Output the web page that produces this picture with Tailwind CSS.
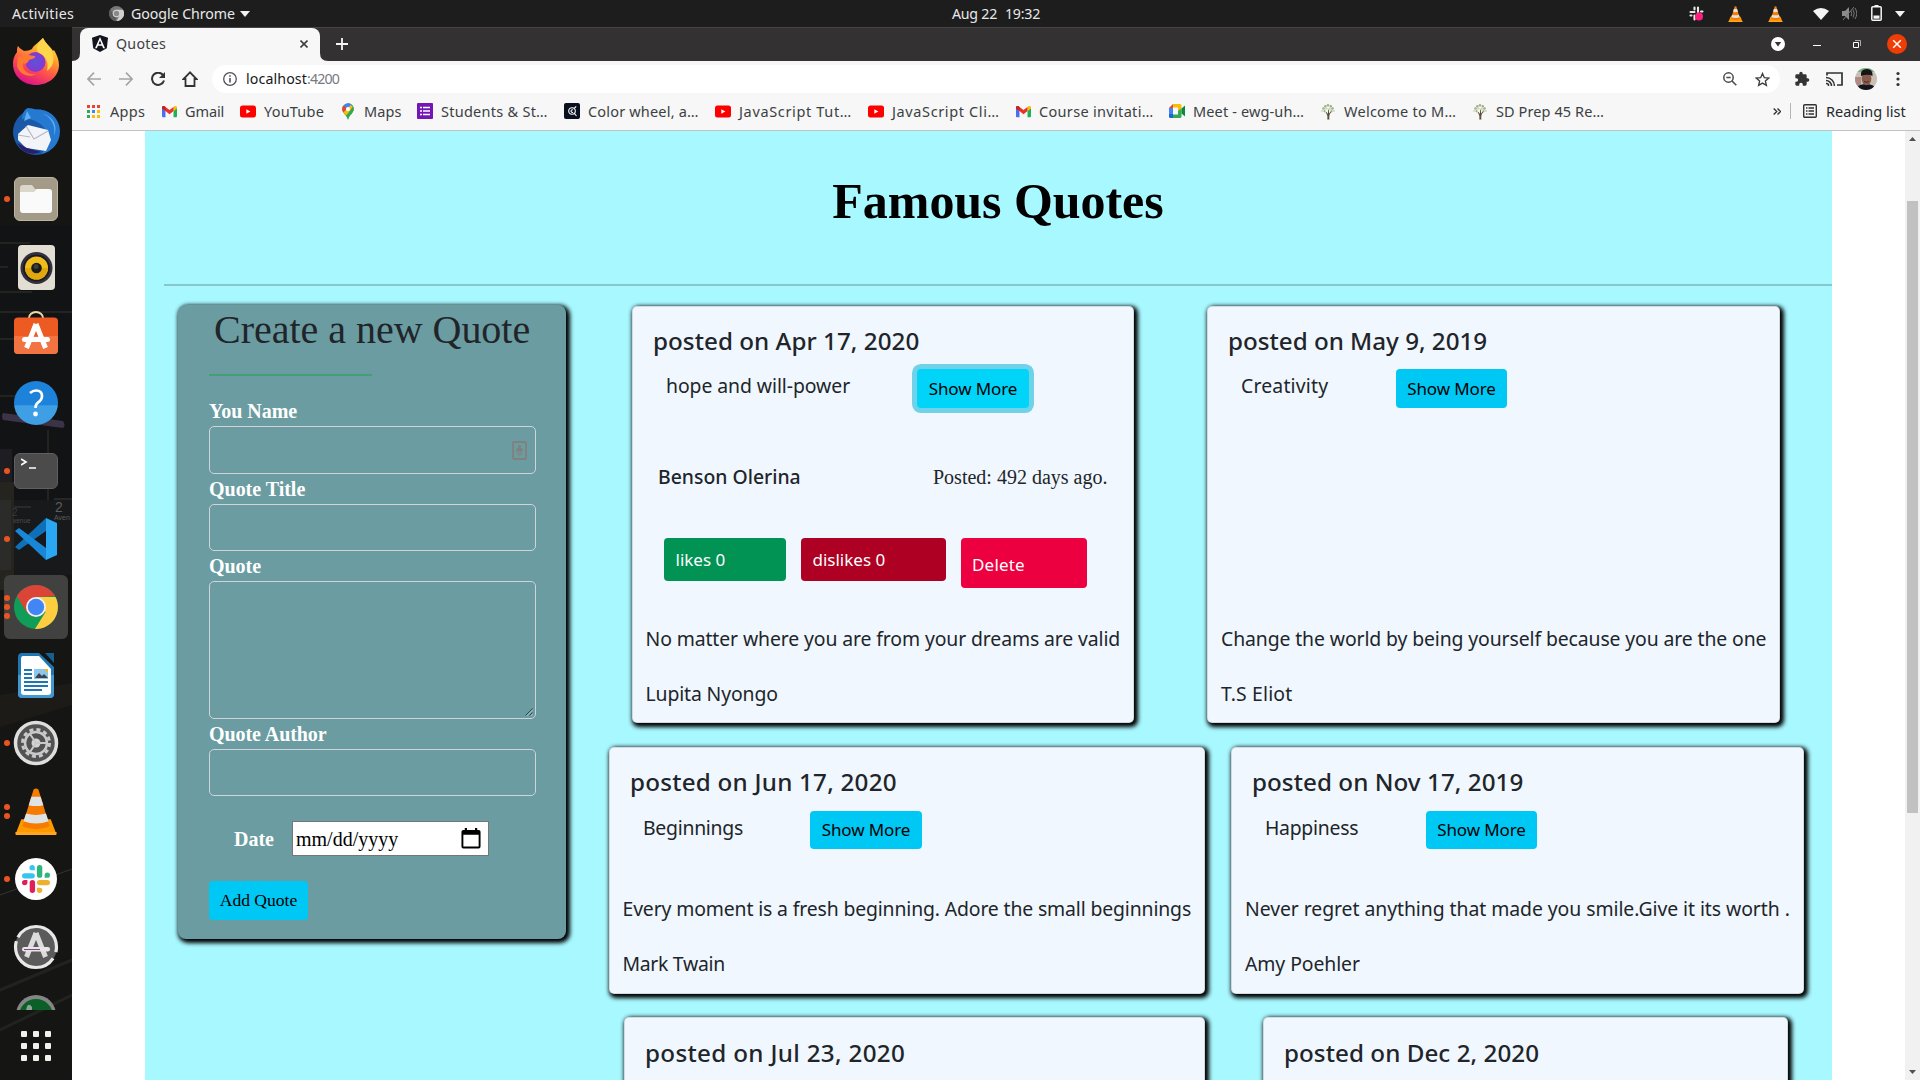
<!DOCTYPE html>
<html lang="en">
<head>
<meta charset="utf-8">
<title>Quotes</title>
<script src="https://cdn.jsdelivr.net/npm/@tailwindcss/browser@4"></script>
</head>
<body class="w-[1920px] h-[1080px] overflow-hidden flex flex-col bg-[#141414] font-['Noto_Sans',sans-serif] text-[14.2px]">

<!-- Shared icon symbols -->
<svg class="hidden">
  <symbol id="gmail" viewBox="0 0 16 12"><path d="M0 1.5V11a1 1 0 0 0 1 1h2.700V5.500z" fill="#4d6bf5"/><path d="M16 1.500V11a1 1 0 0 1-1 1h-2.700V5.500z" fill="#1eb156"/><path d="M12.300 5.500V1.200l1-.8C14.500-.4 16 .2 16 1.600v1.200z" fill="#fbbc04"/><path d="M0 2.800V1.600C0 .2 1.500-.4 2.700.4L8 4.400 13.300.4 12.300 1.200V5.500L8 8.800 3.700 5.500z" fill="#ea3323"/><path d="M0 2.800V1.600C0 .2 1.500-.4 2.700.4l1 .8v4.300z" fill="#c5221f"/></symbol>
  <symbol id="yt" viewBox="0 0 16 12"><rect width="16" height="12" rx="2.500" fill="#f00"/><path d="M6.300 3.800v4.400l4-2.200z" fill="#fff"/></symbol>
  <symbol id="tree" viewBox="0 0 16 16"><path d="M7.300 16c.4-3 .2-5-1.800-7l1-.4 1.300 1.800L8.300 6l.7.1v4l1.700-2 .8.500C9.300 10.500 9 13 9.400 16z" fill="#5a5038"/><g fill="#9db07f"><circle cx="3.500" cy="5" r="1.300"/><circle cx="5.300" cy="2.700" r="1.200"/><circle cx="8" cy="1.700" r="1.200"/><circle cx="10.800" cy="2.700" r="1.200"/><circle cx="12.500" cy="5" r="1.300"/><circle cx="4.600" cy="7.700" r="1.100"/><circle cx="11.500" cy="7.700" r="1.100"/></g><g fill="#cdd6bd"><circle cx="6.300" cy="5" r="1.300"/><circle cx="9.800" cy="5.200" r="1.300"/><circle cx="2" cy="7.500" r=".9"/><circle cx="14" cy="7.500" r=".9"/></g></symbol>
  <symbol id="cone" viewBox="0 0 42 48"><path d="M6 32h30l5 13a2 2 0 0 1-2 3H3a2 2 0 0 1-2-3z" fill="#f90"/><path d="M0 45h42v2q0 1-1 1H1q-1 0-1-1z" fill="#ffa61e"/><path d="M18.500 1.500q2.500-2 5 0L35 39q-14 6-28 0z" fill="#f57c00"/><path d="M16.300 9h9.400l2.800 8.500q-7.500 2-15 0z" fill="#dfe3e6"/><path d="M10.800 26q10 3 20.400 0l2.600 8q-12.500 4.500-25.600 0z" fill="#dfe3e6"/></symbol>
  <symbol id="slack" viewBox="0 0 24 24"><rect x="0" y="7" width="11" height="4.600" rx="2.300" fill="#36c5f0"/><path d="M11 4.600H8.700A2.300 2.300 0 1 1 11 2.300z" fill="#36c5f0"/><rect x="12.800" y="0" width="4.600" height="11" rx="2.300" fill="#2eb67d"/><path d="M19.400 11V8.700a2.300 2.300 0 1 1 2.300 2.300z" fill="#2eb67d"/><rect x="12.800" y="12.800" width="11.200" height="4.600" rx="2.300" fill="#ecb22e"/><path d="M12.800 19.400h2.300a2.300 2.300 0 1 1-2.300 2.300z" fill="#ecb22e"/><rect x="6.600" y="12.800" width="4.600" height="11.200" rx="2.300" fill="#e01e5a"/><path d="M4.600 12.800v2.300a2.300 2.300 0 1 1-2.300-2.300z" fill="#e01e5a"/></symbol>
  <symbol id="cal" viewBox="0 0 20 22"><path d="M2 2h1.500V0h2.300v2h8.400V0h2.300v2H18q2 0 2 2v15.500q0 2-2 2H2q-2 0-2-2V4q0-2 2-2zm0 5v12.500h16V7z" fill="#000" fill-rule="evenodd"/></symbol>
</svg>

<!-- System bar -->
<header class="h-[27px] shrink-0 flex items-center bg-[#1d1d1d] text-[#e8e8e8] leading-[27px]">
  <span class="ml-3 w-[97px] tracking-[0.29px]">Activities</span>
  <svg class="w-[15px] h-[15px]" viewBox="0 0 16 16"><circle cx="8" cy="8" r="8" fill="#787878"/><path d="M8 4h7a8 8 0 0 1-7 12l3.400-6z" fill="#cfcfcf"/><path d="M1.500 3.500L5 10l3 2-1 4A8 8 0 0 1 1.500 3.500z" fill="#5c5c5c"/><circle cx="8" cy="8" r="4" fill="#d8d8d8"/><circle cx="8" cy="8" r="2.900" fill="#8a8a8a"/></svg>
  <span class="ml-[7px] tracking-[-0.06px]">Google Chrome</span>
  <svg class="ml-[5px] w-[10px] h-[6px]" viewBox="0 0 10 6"><path d="M0 0h10L5 6z" fill="#f2f2f2"/></svg>
  <span class="ml-[702px] w-[53px] -mt-px tracking-[-0.22px]">Aug 22</span><span class="w-[35px] -mt-px tracking-[-0.22px]">19:32</span>
  <div class="ml-auto mr-[15px] flex items-center">
    <svg class="w-[15px] h-[16px]" viewBox="0 0 15 16"><g stroke="#e8e8e8" stroke-width="2.100" stroke-linecap="round"><path d="M1.500 6h4M5.500 1.500v2M9 1.500V6M12 5.500h1.500M1.500 9.500h1M5.500 9.500v4"/></g><circle cx="10" cy="10.500" r="4" fill="#ff1f7d"/></svg>
    <svg class="ml-[24px] w-[15px] h-4"><use href="#cone"/></svg>
    <svg class="ml-[25px] w-[15px] h-4"><use href="#cone"/></svg>
    <svg class="ml-[30px] w-4 h-3" viewBox="0 0 16 12"><path d="M0 3Q8-3 16 3L8 12z" fill="#f5f5f5"/></svg>
    <svg class="ml-[13px] w-[15px] h-[15px]" viewBox="0 0 15 15"><path d="M0 5h3l4-4v13l-4-4H0z" fill="#8c8c8c"/><path d="M9 5q1.500 2.500 0 5M11 3.500q2.500 4 0 8M13 2q3.500 5.500 0 11M1 14L12 1" fill="none" stroke="#7a7a7a"/></svg>
    <svg class="ml-[14px] mr-px w-[11px] h-4 -mt-0.5" viewBox="0 0 11 16"><path d="M3.500 0h4v2h-4z" fill="#f5f5f5"/><rect x=".8" y="1.800" width="9.400" height="13.400" rx="1" fill="none" stroke="#f5f5f5" stroke-width="1.500"/><path d="M2.500 10.500h6v3.200h-6z" fill="#f5f5f5"/></svg>
    <svg class="ml-[12px] w-[10px] h-[6px]" viewBox="0 0 10 6"><path d="M0 0h10L5 6z" fill="#f2f2f2"/></svg>
  </div>
</header>

<div class="flex flex-1 min-h-0">
  <!-- Dock -->
  <aside class="relative w-[72px] shrink-0 overflow-hidden bg-[#151514]">
    <svg class="absolute inset-0 w-[72px] h-[1053px]" viewBox="0 27 72 1053">
      <path d="M0 225h72v290H0z" fill="#121315"/>
      <g stroke="#36332a" stroke-width="1.500" opacity=".7"><path d="M0 243h30M0 267h8M0 292h32M0 312h72M0 339h30M0 396h20M48 430v70"/></g>
      <path d="M3 413l60 8q3 4 0 7l-60-8q-2-4 0-7z" fill="#463c54" opacity=".8"/><path d="M0 449h12v33H0z" fill="#1e1d22"/><path d="M0 482h14v108H0z" fill="#26241e"/><path d="M0 500h11v70H0z" fill="#2b2b2a"/>
      <path d="M14 500h58v75H14z" fill="#17191a"/><path d="M54 499h18M14 507h17" stroke="#3c3c3c"/>
      <path d="M0 695l72-12v22L0 727z" fill="#1d1b17"/><path d="M0 895l72-26" stroke="#353531" fill="none"/><path d="M0 990l72-30M0 1030l72-35" stroke="#222220" stroke-width="3" fill="none"/>
      <g font-family="Liberation Sans" fill="#5d5d5d"><text x="55" y="512" font-size="14">2</text><text x="54" y="520" font-size="7">Aven</text><text x="12" y="516" font-size="10" fill="#3a3a3a">2</text><text x="13" y="523" font-size="6.500" fill="#4d4d4d">venue</text></g>
    </svg>
    <nav class="relative h-[981px] mt-[2px] overflow-hidden flex flex-col">
      <div class="h-[68px] shrink-0 flex items-center pl-[13px]">
        <svg class="w-[46px] h-[47px] -mt-[3px]" viewBox="0 0 46 47"><defs><linearGradient id="ff" x1=".8" y1="0" x2=".3" y2="1"><stop offset="0" stop-color="#fff44f"/><stop offset=".35" stop-color="#ffa02c"/><stop offset=".65" stop-color="#ff4f4c"/><stop offset="1" stop-color="#d9108c"/></linearGradient><radialGradient id="fp"><stop offset="0" stop-color="#5a55d9"/><stop offset="1" stop-color="#8a35d0"/></radialGradient></defs><path d="M30 0c2 5 8 9 10 13l1-1c3 5 5 10 5 15 0 11-10 20-23 20S0 38 0 26c0-6 2-9 4-12 0-3 0-4 1-6 2 3 5 4 6 5 3 0 6-1 8-2 1-3 7-7 11-11z" fill="url(#ff)"/><circle cx="22.500" cy="24" r="10" fill="url(#fp)"/><path d="M5 19c5-3 10-2 17-1 1 2-3 3-6 4-1 3-4 5-6 3-1 8 6 12 13 11-8 5-18-1-19-9z" fill="#ff7a30"/><path d="M30 0c2 5 8 9 10 16 2 9-2 14-6 17 2-9-1-15-8-18-5-4-1-10 4-15z" fill="#ffd54a"/></svg>
      </div>
      <div class="h-[68px] shrink-0 flex items-center pl-3">
        <svg class="w-12 h-12" viewBox="0 0 48 48"><circle cx="24" cy="25" r="23" fill="#1a59a8"/><path d="M16 1q5 0 8 2c13-2 24 9 24 21 0 13-9 21-19 23 10-9 9-24-2-31-6-4-12-5-17-4 0-6 3-10 6-11z" fill="#2679d0"/><path d="M15 4l-3 10 7-3zM30 6c9 4 14 12 12 23 4-10 0-19-12-23z" fill="#5cb0f0"/><path d="M6 27l10-9 20 5 3 10-5 11-20-3-8-8z" fill="#f2f4f8"/><path d="M14 19l8 13 14-8M6 28l12 2" fill="none" stroke="#b3b8c4" stroke-width="1.200"/><path d="M5 36l10 5 14 4q-16 6-24-9z" fill="#2b1e6b"/></svg>
      </div>
      <div class="h-[68px] shrink-0 flex items-center pl-1"><i class="w-1.5 h-1.5 rounded-full bg-[#e95420]"></i>
        <div class="ml-1 w-11 h-11 rounded-md bg-[#a39b87] border border-[#bcb5a4] flex items-center justify-center"><svg class="w-8 h-7" viewBox="0 0 32 28"><path d="M0 3q0-3 3-3h9l3 4h14v8H0z" fill="#dcd7cb"/><path d="M0 7h14l3-3h12q3 0 3 3v18q0 3-3 3H3q-3 0-3-3z" fill="#fafafa"/></svg></div>
      </div>
      <div class="h-[68px] shrink-0 flex items-center pl-[17.5px]">
        <svg class="w-[37px] h-[45px]" viewBox="0 0 37 45"><rect width="37" height="45" rx="4" fill="#e3ded3"/><circle cx="18.500" cy="23" r="16" fill="#33313d"/><circle cx="18.500" cy="23" r="13.500" fill="#1c1b24"/><circle cx="18.500" cy="23" r="11.500" fill="#f0be1a"/><path d="M7 23a11.500 11.500 0 0 0 23 0z" fill="#e0a80c"/><circle cx="18.500" cy="23" r="5.300" fill="#1b1b1b"/><circle cx="18" cy="21.500" r="2.500" fill="#3d3d3d"/></svg>
      </div>
      <div class="h-[68px] shrink-0 flex items-center pl-[14px]">
        <svg class="w-11 h-[43px] -mt-[5px]" viewBox="0 0 44 43"><path d="M15 9V7a7 6 0 0 1 14 0v2" fill="none" stroke="#efd9a8" stroke-width="2"/><rect y="6.500" width="44" height="36.500" rx="4" fill="#ed5a22"/><path d="M0 25h44v14q0 4-4 4H4q-4 0-4-4z" fill="#f27443"/><path d="M22 13L12.500 37M22 13l9.500 24" stroke="#fff" stroke-width="5" fill="none"/><rect x="8" y="26" width="28" height="5" rx="2.500" fill="#fff"/></svg>
      </div>
      <div class="h-[68px] shrink-0 flex items-center pl-[14px]">
        <div class="w-11 h-11 rounded-full bg-linear-to-b from-[#1c82da] from-55% to-[#3f9fe4] to-56% flex items-center justify-center"><svg class="w-4 h-7" viewBox="0 0 16 28"><path d="M2 4q3-2.500 6-2.500 6 0 6 5.500 0 4-4 6.500-2.500 2-2.500 5.500" fill="none" stroke="#fff" stroke-width="2.700"/><circle cx="7.500" cy="25" r="2.400" fill="#fff"/></svg></div>
      </div>
      <div class="h-[68px] shrink-0 flex items-center pl-1"><i class="w-1.5 h-1.5 rounded-full bg-[#e95420]"></i>
        <div class="ml-1 w-11 h-9 rounded-md bg-[#4b4b4b] border border-[#5f5f5f] pl-1.5 pt-1"><svg class="w-4 h-3" viewBox="0 0 16 12"><path d="M0 1l5 3-5 3M8 10h7" fill="none" stroke="#fff" stroke-width="1.700"/></svg></div>
      </div>
      <div class="h-[68px] shrink-0 flex items-center pl-1"><i class="w-1.5 h-1.5 rounded-full bg-[#e95420]"></i>
        <svg class="ml-[5px] w-[42px] h-[42px]" viewBox="0 0 42 42"><path d="M31 0l11 5v32l-11 5z" fill="#2aa7f2"/><path d="M0 29l4 3L31 13V0z" fill="#0f70b8"/><path d="M0 13l4-3 27 20v12z" fill="#1a86d6"/></svg>
      </div>
      <div class="h-[68px] shrink-0 px-1 py-0.5"><div class="relative w-16 h-16 rounded-md bg-[#414140]">
        <svg class="absolute left-[10px] top-[10px] w-11 h-11" viewBox="0 0 44 44"><circle cx="22" cy="22" r="22" fill="#0f9d58"/><path d="M3 11a22 22 0 0 1 38 0l-19 1-9 15z" fill="#db4437"/><path d="M22 12h19.500A22 22 0 0 1 21 44l10.500-17z" fill="#ffcd40"/><path d="M3 11l9.500 16 6 5 3-20z" fill="#db4437"/><circle cx="22" cy="22" r="10" fill="#f1f1f1"/><circle cx="22" cy="22" r="8.200" fill="#4285f4"/></svg>
        <i class="absolute left-0 top-[20px] w-1.5 h-1.5 rounded-full bg-[#e95420]"></i><i class="absolute left-0 top-[29px] w-1.5 h-1.5 rounded-full bg-[#e95420]"></i><i class="absolute left-0 top-[38px] w-1.5 h-1.5 rounded-full bg-[#e95420]"></i>
      </div></div>
      <div class="h-[68px] shrink-0 flex items-center pl-[18px]">
        <svg class="w-9 h-[45px]" viewBox="0 0 36 45"><path d="M4 0h17l15 14v27q0 4-4 4H4q-4 0-4-4V4q0-4 4-4z" fill="#1c77b3"/><path d="M27 0h9v10z" fill="#16608f"/><path d="M0 22h36v19q0 4-4 4H4q-4 0-4-4z" fill="#4299d0"/><path d="M5 3h16l12 13v23q0 3-3 3H6q-3 0-3-3V6q0-3 2-3z" fill="#fff"/><path d="M6 17h8M6 21h8M6 25h8M6 29h24M6 33h24M6 37h18" stroke="#1c77b3" stroke-width="2"/><path d="M16 16h14v10H16z" fill="#8cc8ee"/><path d="M17 25l4-5 3 3 2-2 4 4z" fill="#3c4248"/><path d="M26 16h4v4z" fill="#f5b91d"/></svg>
      </div>
      <div class="h-[68px] shrink-0 flex items-center pl-1"><i class="w-1.5 h-1.5 rounded-full bg-[#e95420]"></i>
        <svg class="ml-[3px] w-[46px] h-[46px]" viewBox="0 0 46 46"><circle cx="23" cy="23" r="20.500" fill="#525252" stroke="#dedede" stroke-width="3.500"/><circle cx="23" cy="23" r="13.500" fill="none" stroke="#c9c9c9" stroke-width="3" stroke-dasharray="4 3.070"/><circle cx="23" cy="23" r="11" fill="none" stroke="#c9c9c9" stroke-width="2.500"/><circle cx="23" cy="23" r="4.500" fill="#d4d4d4"/><path d="M23 23h11M23 23l-6-9M23 23l-6 9" stroke="#c9c9c9" stroke-width="2"/></svg>
      </div>
      <div class="h-[68px] shrink-0 flex items-center pl-1"><span class="flex flex-col gap-[3px]"><i class="w-1.5 h-1.5 rounded-full bg-[#e95420]"></i><i class="w-1.5 h-1.5 rounded-full bg-[#e95420]"></i></span>
        <svg class="ml-[5px] w-[42px] h-[47px]"><use href="#cone"/></svg>
      </div>
      <div class="h-[68px] shrink-0 flex items-center pl-1"><i class="w-1.5 h-1.5 rounded-full bg-[#e95420]"></i>
        <div class="ml-[5px] w-[42px] h-[42px] rounded-full bg-white flex items-center justify-center"><svg class="w-7 h-7"><use href="#slack"/></svg></div>
      </div>
      <div class="h-[68px] shrink-0 flex items-center pl-[13px]">
        <svg class="w-[46px] h-[46px]" viewBox="0 0 46 46"><circle cx="23" cy="23" r="21" fill="#5b5b5b"/><circle cx="23" cy="23" r="20.500" fill="none" stroke="#e8e8e8" stroke-width="3.200" stroke-dasharray="58 4 60 6.800" stroke-dashoffset="-12"/><path d="M23 9L13.500 33M23 9l9.500 24" stroke="#dcdcdc" stroke-width="5" fill="none"/><rect x="9" y="23" width="28" height="4.500" rx="2.200" fill="#e6e6e6"/><path d="M11 25.500h16" stroke="#8a3f8a"/></svg>
      </div>
      <div class="h-[68px] shrink-0 pt-[14px] pl-[16px]">
        <svg class="w-10 h-10" viewBox="0 0 40 40"><circle cx="20" cy="20" r="20" fill="#858585"/><circle cx="20" cy="21" r="17" fill="#0b6028"/><path d="M12 10q2-1 4 2v6h-6q0-6 2-8z" fill="#8ba391"/></svg>
      </div>
    </nav>
    <div class="relative mt-[21px] ml-[21px] grid grid-cols-3 gap-1.5 w-[30px]">
      <i class="h-1.5 rounded-[1px] bg-[#f3f1ec]"></i><i class="h-1.5 rounded-[1px] bg-[#f3f1ec]"></i><i class="h-1.5 rounded-[1px] bg-[#f3f1ec]"></i><i class="h-1.5 rounded-[1px] bg-[#f3f1ec]"></i><i class="h-1.5 rounded-[1px] bg-[#f3f1ec]"></i><i class="h-1.5 rounded-[1px] bg-[#f3f1ec]"></i><i class="h-1.5 rounded-[1px] bg-[#f3f1ec]"></i><i class="h-1.5 rounded-[1px] bg-[#f3f1ec]"></i><i class="h-1.5 rounded-[1px] bg-[#f3f1ec]"></i>
    </div>
  </aside>

  <!-- Browser window -->
  <section class="w-[1848px] flex flex-col bg-white">
    <div class="h-[34px] shrink-0 flex bg-[#333132] border-t border-[#474546] text-[#3c4043]">
      <svg class="w-2 h-2 self-end" viewBox="0 0 8 8"><path d="M8 0v8H0q8 0 8-8z" fill="#f6f7f6"/></svg>
      <div class="w-60 h-[33px] rounded-t-lg bg-[#f6f7f6] flex items-center pb-0.5">
        <svg class="ml-3 w-4 h-[17px]" viewBox="0 0 16 17"><path d="M8 0l8 2.700-1.200 10.500L8 17l-6.800-3.800L0 2.700z" fill="#12151f"/><path d="M8 2L3 13.200h1.900l1-2.500h4.200l1 2.500H13zm0 3.600l1.500 3.600h-3z" fill="#fff"/></svg>
        <span class="ml-2 tracking-[0.27px]">Quotes</span>
        <svg class="ml-auto mr-3 w-2 h-2" viewBox="0 0 8 8"><path d="M.5.500l7 7M7.500.500l-7 7" stroke="#3c4043" stroke-width="1.600"/></svg>
      </div>
      <svg class="w-2 h-2 self-end" viewBox="0 0 8 8"><path d="M0 0v8h8Q0 8 0 0z" fill="#f6f7f6"/></svg>
      <svg class="ml-2 w-3 h-3 mt-[10px]" viewBox="0 0 12 12"><path d="M6 0v12M0 6h12" stroke="#f5f5f5" stroke-width="1.800"/></svg>
      <div class="ml-auto mr-[13px] pb-0.5 flex items-center">
        <svg class="w-[14px] h-[14px]" viewBox="0 0 14 14"><circle cx="7" cy="7" r="7" fill="#fff"/><path d="M3.800 5h6.400L7 9.500z" fill="#333"/></svg>
        <i class="ml-7 w-2 h-px mt-1 bg-white"></i>
        <svg class="ml-[32px] w-2 h-2" viewBox="0 0 8 8"><path d="M.5 2.500h5v5h-5z" fill="none" stroke="#fff"/><path d="M2 .5h5.500V6" fill="none" stroke="#aaa"/></svg>
        <svg class="ml-[26px] w-5 h-5" viewBox="0 0 20 20"><circle cx="10" cy="10" r="10" fill="#f03c05"/><path d="M6.200 6.200l7.600 7.600M13.800 6.200l-7.600 7.600" stroke="#fff" stroke-width="1.500"/></svg>
      </div>
    </div>

    <div class="h-9 shrink-0 flex items-center bg-[#f6f7f6] text-[#3c4043]">
      <svg class="ml-[15px] w-[14px] h-[14px]" viewBox="0 0 14 14"><path d="M14 7H1M7 .7L.9 7 7 13.300" fill="none" stroke="#a5a5a5" stroke-width="1.700"/></svg>
      <svg class="ml-[18px] w-[14px] h-[14px]" viewBox="0 0 14 14"><path d="M0 7h13M7 .7L13.100 7 7 13.300" fill="none" stroke="#a5a5a5" stroke-width="1.700"/></svg>
      <svg class="ml-[18px] w-[14px] h-[14px]" viewBox="0 0 14 14"><path d="M12.300 3.500A6.100 6.100 0 1 0 13 8.500" fill="none" stroke="#333" stroke-width="2"/><path d="M14 0v6H8z" fill="#333"/></svg>
      <svg class="ml-[17px] w-4 h-4" viewBox="0 0 16 16"><path d="M8 1.300L1.500 8H3.500v7h9V8h2z" fill="none" stroke="#333" stroke-width="1.800"/></svg>
      <div class="ml-[14px] w-[1568px] h-7 rounded-full bg-white flex items-center pl-[11px] pr-[10px]">
        <svg class="w-[14px] h-[14px]" viewBox="0 0 14 14"><circle cx="7" cy="7" r="6.300" fill="none" stroke="#4f5358" stroke-width="1.300"/><path d="M7 6v4.500M7 3.300v1.500" stroke="#4f5358" stroke-width="1.600"/></svg>
        <span class="ml-[9px] text-[#17181a] tracking-[0.12px]">localhost<span class="text-[#777b80] tracking-[-0.85px]">:4200</span></span>
        <svg class="ml-auto w-[14px] h-[14px]" viewBox="0 0 14 14"><circle cx="5.500" cy="5.500" r="4.700" fill="none" stroke="#4a4d50" stroke-width="1.500"/><path d="M9 9l4.300 4.300M3.300 5.500h4.400" stroke="#4a4d50" stroke-width="1.600"/></svg>
        <svg class="ml-[18px] w-[15px] h-[15px]" viewBox="0 0 24 24"><path d="M12 2.500l2.900 6.600 7.100.6-5.400 4.700 1.600 7-6.200-3.700-6.200 3.700 1.600-7L2 9.700l7.100-.6z" fill="none" stroke="#3c4043" stroke-width="2.200"/></svg>
      </div>
      <svg class="ml-[14px] w-4 h-4" viewBox="0 0 24 24"><path d="M20.500 11H19V7a2 2 0 0 0-2-2h-4V3.500a2.500 2.500 0 0 0-5 0V5H4a2 2 0 0 0-2 2v3.800h1.500a2.700 2.700 0 0 1 0 5.400H2V20c0 1.100.9 2 2 2h3.800v-1.500a2.700 2.700 0 0 1 5.400 0V22H17a2 2 0 0 0 2-2v-4h1.500a2.500 2.500 0 0 0 0-5z" fill="#333"/></svg>
      <svg class="ml-4 w-[17px] h-[14px]" viewBox="0 0 17 14"><path d="M1 3.500V1h15v12h-5" fill="none" stroke="#333" stroke-width="1.700"/><path d="M0 11.500h.5a2 2 0 0 1 2 2v.5M0 8.500a5.500 5.500 0 0 1 5.500 5.500M0 5.500A8.500 8.500 0 0 1 8.500 14" fill="none" stroke="#333" stroke-width="1.500"/></svg>
      <svg class="ml-[12px] w-[22px] h-[22px]" viewBox="0 0 22 22"><defs><clipPath id="av"><circle cx="11" cy="11" r="11"/></clipPath></defs><g clip-path="url(#av)"><path d="M0 0h22v22H0z" fill="#c9bfb4"/><path d="M0 0h22v4H0z" fill="#7fae84"/><path d="M0 9h6v9H0z" fill="#b08a86"/><path d="M1 22q1-6 10-6t10 6z" fill="#14141c"/><ellipse cx="11.500" cy="11" rx="4.800" ry="6.200" fill="#8a5a4a"/><path d="M6 8q-1-7 6-7 6 0 5.500 7-5-2.500-11.500 0z" fill="#15151a"/><path d="M9 13.500q2.500 1.500 5 0" stroke="#4d2a24" fill="none"/></g></svg>
      <svg class="ml-[19px] w-1 h-4" viewBox="0 0 4 16"><g fill="#333"><circle cx="2" cy="2.500" r="1.600"/><circle cx="2" cy="8" r="1.600"/><circle cx="2" cy="13.500" r="1.600"/></g></svg>
    </div>

    <!-- Bookmarks -->
    <div class="h-[34px] shrink-0 flex items-center bg-[#f6f7f6] border-b border-[#c2c2c2] text-[#3c4043] text-[14.5px] tracking-[0.1px] leading-[28px] whitespace-nowrap pb-[5px]">
      <div class="ml-[15px] w-[75px] flex items-center"><svg class="w-[13px] h-[13px] mr-[10px]" viewBox="0 0 13 13"><path d="M0 0h3v3H0zM5 0h3v3H5z" fill="#ea4335"/><path d="M10 0h3v3h-3z" fill="#ea4335"/><path d="M0 5h3v3H0z" fill="#34a853"/><path d="M5 5h3v3H5z" fill="#4285f4"/><path d="M10 5h3v3h-3z" fill="#fbbc05"/><path d="M0 10h3v3H0z" fill="#34a853"/><path d="M5 10h3v3H5zM10 10h3v3h-3z" fill="#fbbc05"/></svg><span class="tracking-[0.3px]">Apps</span></div>
      <div class="w-[78px] flex items-center"><svg class="w-[15px] h-[13px] mr-2"><use href="#gmail"/></svg><span class="tracking-[-0.1px]">Gmail</span></div>
      <div class="w-[101px] flex items-center"><svg class="w-4 h-[13px] mr-2"><use href="#yt"/></svg><span class="tracking-[0.2px]">YouTube</span></div>
      <div class="w-[76px] flex items-center"><svg class="w-[12px] h-[17px] ml-px mr-[10px]" viewBox="0 0 13 18"><path d="M6.500 0A6.300 6.300 0 0 0 .2 6.300C.2 11 5 12.500 6.500 18 8 12.500 12.800 11 12.800 6.300A6.300 6.300 0 0 0 6.500 0z" fill="#34a853"/><path d="M6.500 0A6.300 6.300 0 0 1 12 3.300L6 9.500l-4.500-6A6 6 0 0 1 6.500 0z" fill="#4285f4"/><path d="M1.600 2.500l4 3.300L1.500 10Q.2 8.500.2 6.300t1.400-3.800z" fill="#ea4335"/><path d="M1.500 10l8-8q3.300 1.700 3.300 4L4.500 13z" fill="#fbbc04"/><path d="M12 3.200q2 4-1.500 7.300-3 3-4 7.500-.5-2-2-4z" fill="#34a853"/><circle cx="6.500" cy="6.300" r="2.300" fill="#fff"/></svg>Maps</div>
      <div class="w-[147px] flex items-center"><svg class="w-4 h-4 mr-2" viewBox="0 0 16 16"><rect width="16" height="16" rx="1" fill="#7316b5"/><path d="M3 4.500h2M6 4.500h7M3 8h2M6 8h7M3 11.500h2M6 11.500h7" stroke="#fff" stroke-width="1.600"/></svg><span class="tracking-[0.26px]">Students &amp; St…</span></div>
      <div class="w-[151px] flex items-center"><svg class="w-4 h-4 mr-2" viewBox="0 0 16 16"><rect width="16" height="16" rx="2" fill="#0b1020"/><circle cx="8" cy="8" r="3.300" fill="none" stroke="#fff" stroke-width="1.100"/><path d="M9 7a1.300 1.300 0 1 0 0 2.200M10 10l2.500 3M10.500 5l1.700-1.700" fill="none" stroke="#fff" stroke-width="1.100"/></svg><span class="tracking-[0.18px]">Color wheel, a…</span></div>
      <div class="w-[153px] flex items-center"><svg class="w-4 h-[13px] mr-2"><use href="#yt"/></svg><span class="tracking-[0.65px]">JavaScript Tut…</span></div>
      <div class="w-[148px] flex items-center"><svg class="w-4 h-[13px] mr-2"><use href="#yt"/></svg><span class="tracking-[0.62px]">JavaScript Cli…</span></div>
      <div class="w-[153px] flex items-center"><svg class="w-[15px] h-[13px] mr-2"><use href="#gmail"/></svg><span class="tracking-[0.32px]">Course invitati…</span></div>
      <div class="w-[151px] flex items-center"><svg class="w-4 h-[14px] mr-2" viewBox="0 0 16 14"><path d="M4 0h7q1.500 0 1.500 1.500V5L9 8V3.500H4z" fill="#fbbc04"/><path d="M0 4l4-4v4z" fill="#ea4335"/><path d="M0 4h4v6.500H0z" fill="#4285f4"/><path d="M0 10h4v4H1.500Q0 14 0 12.500z" fill="#1967d2"/><path d="M4 10.500h5V7l3.500-2.500v8q0 1.500-1.500 1.500H4z" fill="#34a853"/><path d="M12.500 4.500L16 1.500v11l-3.500-3z" fill="#0a8a3f"/></svg><span class="tracking-[0.14px]">Meet - ewg-uh…</span></div>
      <div class="w-[152px] flex items-center"><svg class="w-4 h-[17px] mr-2"><use href="#tree"/></svg><span class="tracking-[0.26px]">Welcome to M…</span></div>
      <div class="flex items-center"><svg class="w-4 h-[17px] mr-2"><use href="#tree"/></svg>SD Prep 45 Re…</div>
      <div class="ml-auto mr-[14px] flex items-center text-[#26282b]"><svg class="w-2 h-[7px]" viewBox="0 0 8 7"><path d="M.7.500l3 3-3 3M4.500.500l3 3-3 3" fill="none" stroke="#333" stroke-width="1.400"/></svg><i class="ml-[9px] w-px h-4 bg-[#b5b5b5]"></i><svg class="ml-3 w-[14px] h-[14px]" viewBox="0 0 14 14"><rect x=".7" y=".7" width="12.600" height="12.600" rx="1" fill="none" stroke="#333" stroke-width="1.400"/><path d="M3 4h1.500M5.500 4H11M3 7h1.500M5.500 7H11M3 10h1.500M5.500 10H11" stroke="#333" stroke-width="1.400"/></svg><span class="ml-[9px] w-20 tracking-[0.05px]">Reading list</span></div>
    </div>

    <!-- Page -->
    <div class="flex-1 min-h-0 flex">
      <main class="ml-[73px] w-[1687px] bg-[#a8f8ff] overflow-hidden pl-[19px]">
        <h1 class="h-[153px] text-center text-[50px] leading-[60px] pt-[40px] tracking-[-0.05px] font-bold text-black font-['Liberation_Serif',serif]">Famous Quotes</h1>
        <hr class="border-0 h-0.5 bg-[#87c6cc]">
        <div class="flex pt-[19px] text-[#212529] text-[19.4px] leading-[30px]">
          <form class="ml-[14px] w-[388px] h-[634px] rounded-lg bg-[#6a9ca1] shadow-[2px_2px_4px_2px_#000] pl-[31px] pr-[30px] text-[20px] text-white font-['Liberation_Serif',serif]">
            <h2 class="pl-[5px] pt-px text-[40px] leading-[48px] tracking-[-0.02px] text-[#212529] whitespace-nowrap">Create a new Quote</h2>
            <div class="mt-5 w-[163px] h-0.5 bg-[#439f78]"></div>
            <label class="block mt-[20px] h-[30px] font-bold tracking-[-0.02px]">You Name</label>
            <div class="h-12 rounded-[5px] border border-[#ced4da] flex items-center justify-end pr-[8px]"><svg class="w-[15px] h-[19px]" viewBox="0 0 15 19"><rect x="1" y="1" width="13" height="17" rx="1" fill="none" stroke="#82807f" stroke-width="1.800"/><circle cx="7.500" cy="5.500" r="1.600" fill="#82807f"/><path d="M4.500 10q0-3 3-3t3 3zM4.500 12h6M5.500 14h4" fill="#82807f" stroke="#82807f"/></svg></div>
            <label class="block h-[30px] font-bold tracking-[-0.02px]">Quote Title</label>
            <div class="h-[47px] rounded-[5px] border border-[#ced4da]"></div>
            <label class="block h-[30px] font-bold tracking-[-0.04px]">Quote</label>
            <div class="h-[138px] rounded-[5px] border border-[#ced4da] flex items-end justify-end p-[2px]"><svg class="w-2 h-2" viewBox="0 0 8 8"><path d="M.5 7.500l7-7M4.500 7.500l3-3" stroke="#2f4547"/><path d="M1.800 7.900l6-6M5.800 7.900l2-2" stroke="#b9d2d4" stroke-width=".8"/></svg></div>
            <label class="block h-[30px] font-bold tracking-[-0.06px]">Quote Author</label>
            <div class="h-[47px] rounded-[5px] border border-[#ced4da]"></div>
            <div class="mt-[25px] h-[35px] flex items-center pl-[25px]"><label class="w-[58px] font-bold">Date</label><div class="w-[197px] h-[35px] bg-white border border-[#767676] flex items-center pl-[3px] pr-[7px] text-black"><span class="pt-px">mm/dd/yyyy</span><svg class="ml-auto w-5 h-[21px]"><use href="#cal"/></svg></div></div>
            <button class="mt-[25px] block w-[99px] h-[39px] rounded-[4px] bg-[#00c8f4] text-[17.6px] leading-[39px] tracking-[-0.03px] text-black">Add Quote</button>
          </form>

          <div class="shrink-0 w-[1266px] pt-px flex flex-col">
            <div class="flex">
              <article class="ml-[66px] w-[502px] h-[417px] shrink-0 rounded-[5px] bg-[#f0f7ff] border border-black/12 shadow-[2px_2px_4px_2px_#000] pl-[13px] pt-[19px] whitespace-nowrap">
                <h5 class="pl-[7px] text-[24.2px] font-medium tracking-[0.04px]">posted on Apr 17, 2020</h5>
                <div class="flex pt-[13px] pl-5"><span class="mt-[1.5px] w-[251px] tracking-[-0.07px]">hope and will-power</span><button class="w-[112px] h-[39px] rounded-[4px] bg-[#00d5f9] ring-5 ring-[#6fd2e8] text-[17px] leading-[39px] tracking-[-0.12px] text-black">Show More</button></div>
                <div class="flex mt-[54px] pl-[12px]"><span class="w-[275px] font-medium">Benson Olerina</span><span class="text-[20px] font-['Liberation_Serif',serif]">Posted: 492 days ago.</span></div>
                <div class="flex mt-[46px] pl-[18px] text-white text-[17px] leading-[43px]"><div class="w-[122px] h-[43px] rounded-[4px] bg-[#009354] pl-[11.5px]">likes 0</div><div class="ml-[15px] w-[145px] h-[43px] rounded-[4px] bg-[#ad0022] pl-[11.5px]">dislikes 0</div><div class="ml-[15px] w-[126px] h-[50px] rounded-[4px] bg-[#ec0040] pl-[11px] pt-[5px] tracking-[0.2px]">Delete</div></div>
                <p class="mt-[36px] tracking-[-0.11px] -ml-[0.5px]">No matter where you are from your dreams are valid</p>
                <p class="mt-[25px] tracking-[-0.13px] -ml-[0.5px]">Lupita Nyongo</p>
              </article>
              <article class="ml-[73px] w-[573px] h-[417px] shrink-0 rounded-[5px] bg-[#f0f7ff] border border-black/12 shadow-[2px_2px_4px_2px_#000] pl-[13px] pt-[19px] whitespace-nowrap">
                <h5 class="pl-[7px] text-[24.2px] font-medium tracking-[-0.01px]">posted on May 9, 2019</h5>
                <div class="flex pt-[13px] pl-5"><span class="mt-[1.5px] w-[155px] tracking-[0.18px]">Creativity</span><button class="w-[111px] h-[39px] rounded-[4px] bg-[#00c8f4] text-[17px] leading-[39px] tracking-[-0.12px] text-black">Show More</button></div>
                <p class="mt-[216px] tracking-[-0.11px]">Change the world by being yourself because you are the one</p>
                <p class="mt-[25px] tracking-[0.15px]">T.S Eliot</p>
              </article>
            </div>
            <div class="flex mt-6">
              <article class="ml-[43px] w-[596px] h-[247px] shrink-0 rounded-[5px] bg-[#f0f7ff] border border-black/12 shadow-[2px_2px_4px_2px_#000] pl-[13px] pt-[19px] whitespace-nowrap">
                <h5 class="pl-[7px] text-[24.2px] font-medium tracking-[0.23px]">posted on Jun 17, 2020</h5>
                <div class="flex pt-[14px] pl-5"><span class="mt-[1.5px] w-[167px] tracking-[-0.26px]">Beginnings</span><button class="w-[112px] h-[38px] rounded-[4px] bg-[#00c8f4] text-[17px] leading-[38px] tracking-[-0.12px] text-black">Show More</button></div>
                <p class="mt-[45px] tracking-[-0.14px] -ml-[0.5px]">Every moment is a fresh beginning. Adore the small beginnings</p>
                <p class="mt-[25px] tracking-[-0.3px] -ml-[0.5px]">Mark Twain</p>
              </article>
              <article class="ml-[26px] w-[573px] h-[247px] shrink-0 rounded-[5px] bg-[#f0f7ff] border border-black/12 shadow-[2px_2px_4px_2px_#000] pl-[13px] pt-[19px] whitespace-nowrap">
                <h5 class="pl-[7px] text-[24.2px] font-medium tracking-[0.05px]">posted on Nov 17, 2019</h5>
                <div class="flex pt-[14px] pl-5"><span class="mt-[1.5px] w-[161px] tracking-[-0.27px]">Happiness</span><button class="w-[111px] h-[38px] rounded-[4px] bg-[#00c8f4] text-[17px] leading-[38px] tracking-[-0.12px] text-black">Show More</button></div>
                <p class="mt-[45px] tracking-[-0.06px]">Never regret anything that made you smile.Give it its worth .</p>
                <p class="mt-[25px] tracking-[-0.08px]">Amy Poehler</p>
              </article>
            </div>
            <div class="flex mt-[23px]">
              <article class="ml-[58px] w-[581px] h-[247px] shrink-0 rounded-[5px] bg-[#f0f7ff] border border-black/12 shadow-[2px_2px_4px_2px_#000] pl-[13px] pt-5 whitespace-nowrap">
                <h5 class="pl-[7px] text-[24.2px] font-medium tracking-[0.32px]">posted on Jul 23, 2020</h5>
              </article>
              <article class="ml-[58px] w-[525px] h-[247px] shrink-0 rounded-[5px] bg-[#f0f7ff] border border-black/12 shadow-[2px_2px_4px_2px_#000] pl-[13px] pt-5 whitespace-nowrap">
                <h5 class="pl-[7px] text-[24.2px] font-medium tracking-[0.05px]">posted on Dec 2, 2020</h5>
              </article>
            </div>
          </div>
        </div>
      </main>
      <div class="ml-auto w-[15px] bg-[#f1f1f1] flex flex-col items-center py-[6px]">
        <svg class="w-[7px] h-1" viewBox="0 0 7 4"><path d="M0 4h7L3.500 0z" fill="#505050"/></svg>
        <div class="mt-[60px] w-[11px] h-[612px] bg-[#c1c1c1]"></div>
        <svg class="mt-auto w-[7px] h-1" viewBox="0 0 7 4"><path d="M0 0h7L3.500 4z" fill="#505050"/></svg>
      </div>
    </div>
  </section>
</div>
</body>
</html>
